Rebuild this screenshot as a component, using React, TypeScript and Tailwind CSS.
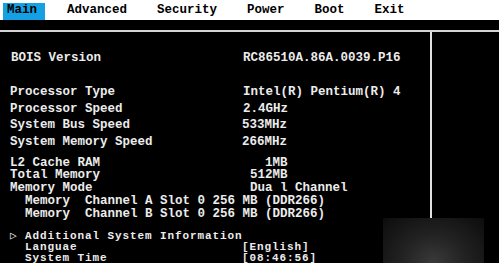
import React from "react";

const menu = ["Advanced", "Security", "Power", "Boot", "Exit"];

function Row({
  label,
  value,
  className,
  valueClass = "pl-[233px]",
}: {
  label: string;
  value?: string;
  className: string;
  valueClass?: string;
}) {
  return (
    <div className={`flex whitespace-pre ${className}`}>
      <span className="w-[0px]">{label}</span>
      {value && <span className={valueClass}>{value}</span>}
    </div>
  );
}

export default function App() {
  return (
    <div className="relative w-[499px] h-[263px] overflow-hidden bg-black font-['Liberation_Mono',monospace] text-[12.5px]">
      {/* menu bar */}
      <div className="h-[20px] bg-white flex items-end text-black font-bold">
        <div className="ml-[3px] h-[17px] pl-[4px] pr-[8px] bg-[#14a0e2] leading-[15px]">
          Main
        </div>
        <div className="flex gap-[30px] ml-[22px] h-[17px] leading-[15px]">
          {menu.map((m) => (
            <span key={m}>{m}</span>
          ))}
        </div>
      </div>
      <div className="h-[10px]" />
      <div className="h-[2px] bg-[#d4d4d4]" />

      <div className="flex h-[231px]">
        <div className="w-[432px] border-r-2 border-[#e0e0e0] text-[#ececec] font-bold pl-[10px]">
          <Row label="BOIS Version" value="RC86510A.86A.0039.P16" className="mt-[18px] h-[16px] leading-[16px] pl-[1px]" valueClass="pl-[232px]" />

          <Row label="Processor Type" value="Intel(R) Pentium(R) 4" className="mt-[18px] h-[16.5px] leading-[16.5px]" />
          <Row label="Processor Speed" value="2.4GHz" className="h-[16.5px] leading-[16.5px]" />
          <Row label="System Bus Speed" value="533MHz" className="h-[16.5px] leading-[16.5px]" valueClass="pl-[232px]" />
          <Row label="System Memory Speed" value="266MHz" className="h-[16.5px] leading-[16.5px]" valueClass="pl-[232px]" />

          <Row label="L2 Cache RAM" value="  1MB" className="mt-[6.5px] h-[12.8px] leading-[12.8px]" valueClass="pl-[240px]" />
          <Row label="Total Memory" value="512MB" className="h-[12.8px] leading-[12.8px]" valueClass="pl-[240px]" />
          <Row label="Memory Mode" value="Dua l Channel" className="h-[12.8px] leading-[12.8px]" valueClass="pl-[240px]" />
          <Row label="  Memory  Channel A Slot 0 256 MB (DDR266)" className="h-[12.8px] leading-[12.8px]" />
          <Row label="  Memory  Channel B Slot 0 256 MB (DDR266)" className="h-[12.8px] leading-[12.8px]" />

          <div className="text-[11px] tracking-[0.9px]">
            <Row label="▷ Additional System Information" className="mt-[11px] h-[11px] leading-[11px]" />
            <Row label="  Languae" value="[English]" className="h-[11px] leading-[11px]" valueClass="pl-[232px]" />
            <Row label="  System Time" value="[08:46:56]" className="h-[11px] leading-[11px]" valueClass="pl-[232px]" />
          </div>
        </div>
        <div className="flex-1" />
      </div>

      {/* faded watermark patch */}
      <div className="absolute left-[383px] top-[218px] w-[101px] h-[45px] bg-[radial-gradient(ellipse_at_50%_100%,#3a3a3a_0%,#222_45%,#0c0c0c_100%)]" />
    </div>
  );
}
